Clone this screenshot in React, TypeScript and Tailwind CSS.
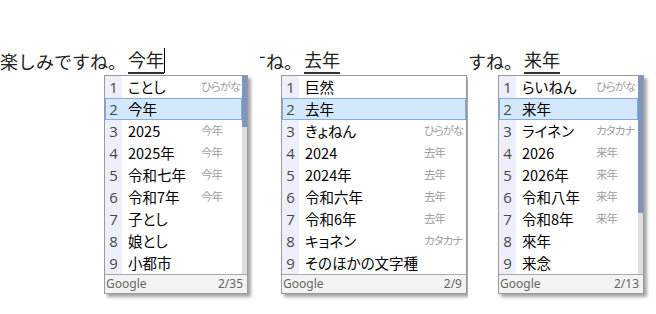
type Candidate = [string, string?];

interface PanelProps {
  items: Candidate[];
  width: string;
  candWidth: string;
  count: string;
  thumb?: string;
}

const jp = "font-['Noto_Sans_CJK_JP','Noto_Sans',sans-serif] [font-feature-settings:'palt']";

function CandidatePanel({ items, width, candWidth, count, thumb }: PanelProps) {
  return (
    <div className={`${width} border border-[#9a9a9a] bg-white shadow-[3px_3px_3px_rgba(0,0,0,0.35)] ${jp}`}>
      <div className="flex">
        <div className="flex-1">
          {items.map(([word, note], i) => {
            const active = i === 1;
            return (
              <div
                key={i}
                className={`flex h-[22px] items-center ${
                  active ? 'border border-[#86acdb] bg-[#d3e8fd]' : ''
                }`}
              >
                <div
                  className={`flex h-full w-[17px] shrink-0 items-center justify-center font-['Open_Sans',sans-serif] text-[15px] text-[#484848] ${
                    active ? '-ml-px' : 'bg-[#efeffb]'
                  }`}
                >
                  {i + 1}
                </div>
                <div className={`${candWidth} shrink-0 whitespace-nowrap pl-[6px] text-[14.5px] leading-none text-black`}>
                  {word}
                </div>
                <div className="whitespace-nowrap text-[11.5px] leading-none tracking-[-1px] text-[#a0a0a0]">{note}</div>
              </div>
            );
          })}
        </div>
        {thumb && (
          <div className="w-[5px] bg-[#dedede]">
            <div className={`${thumb} bg-[#7d95c0]`} />
          </div>
        )}
      </div>
      <div className="flex h-[19px] items-center justify-between border-t border-[#aaaaaa] bg-[#f3f3f3] pl-[1px] pr-[4px] font-['Noto_Sans',sans-serif] text-[12px] text-[#666]">
        <span>Google</span>
        <span>{count}</span>
      </div>
    </div>
  );
}

function TopLine({ before, comp, caret, shift }: { before: string; comp: string; caret?: boolean; shift: string }) {
  return (
    <div className={`flex h-[74px] items-end whitespace-nowrap font-['Noto_Sans_CJK_JP',sans-serif] text-[18px] leading-[25px] text-[#222] ${shift}`}>
      <span>{before}</span>
      <span className="ml-[2px] border-b-2 border-[#333]">{comp}</span>
      {caret && <span className="mb-[1px] h-[25px] w-px bg-black" />}
    </div>
  );
}

export default function App() {
  const p1: Candidate[] = [
    ['ことし', 'ひらがな'],
    ['今年'],
    ['2025', '今年'],
    ['2025年', '今年'],
    ['令和七年', '今年'],
    ['令和7年', '今年'],
    ['子とし'],
    ['娘とし'],
    ['小都市'],
  ];
  const p2: Candidate[] = [
    ['巨然'],
    ['去年'],
    ['きょねん', 'ひらがな'],
    ['2024', '去年'],
    ['2024年', '去年'],
    ['令和六年', '去年'],
    ['令和6年', '去年'],
    ['キョネン', 'カタカナ'],
    ['そのほかの文字種'],
  ];
  const p3: Candidate[] = [
    ['らいねん', 'ひらがな'],
    ['来年'],
    ['ライネン', 'カタカナ'],
    ['2026', '来年'],
    ['2026年', '来年'],
    ['令和八年', '来年'],
    ['令和8年', '来年'],
    ['來年'],
    ['来念'],
  ];

  return (
    <div className="flex h-[314px] w-[656px] overflow-hidden bg-white">
      <div className="w-[260px] shrink-0 overflow-hidden">
        <TopLine before="楽しみですね。" comp="今年" caret shift="ml-0" />
        <div className="ml-[104px] mt-px">
          <CandidatePanel items={p1} width="w-[144px]" candWidth="w-[79px]" count="2/35" thumb="h-[51px]" />
        </div>
      </div>
      <div className="w-[208px] shrink-0 overflow-hidden">
        <TopLine before="すね。" comp="去年" shift="-ml-[12px]" />
        <div className="ml-[21px] mt-px">
          <CandidatePanel items={p2} width="w-[186px]" candWidth="w-[125px]" count="2/9" />
        </div>
      </div>
      <div className="w-[188px] shrink-0 overflow-hidden">
        <TopLine before="すね。" comp="来年" shift="ml-0" />
        <div className="ml-[30px] mt-px">
          <CandidatePanel items={p3} width="w-[146px]" candWidth="w-[80px]" count="2/13" thumb="h-[137px]" />
        </div>
      </div>
    </div>
  );
}
